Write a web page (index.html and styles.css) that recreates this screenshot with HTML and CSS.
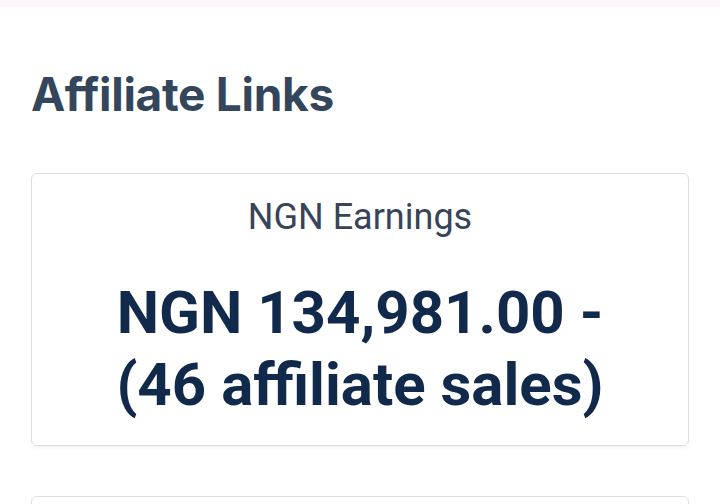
FILE: index.html
```html
<!DOCTYPE html>
<html lang="en">
<head>
<meta charset="utf-8">
<link rel="stylesheet" href="styles.css">
</head>
<body>
<div class="topbar"></div>
<main class="page">
  <h1 class="title">Affiliate Links</h1>
  <section class="card">
    <div class="label">NGN Earnings</div>
    <div class="amount">NGN 134,981.00 -<br>(46 affiliate sales)</div>
  </section>
  <section class="card next"></section>
</main>
</body>
</html>
```
FILE: styles.css
```css
html, body {
  margin: 0;
  padding: 0;
  background: #ffffff;
  overflow: hidden;
  height: 504px;
}
.topbar {
  height: 7px;
  background: #fdf6fc;
}
.page {
  padding: 0 31px;
}
.title {
  margin: 57px 0 0 0;
  font-family: Inter, "Noto Sans", sans-serif;
  font-weight: 700;
  font-size: 46px;
  line-height: 60px;
  color: #34465c;
  letter-spacing: -0.3px;
}
.card {
  margin-top: 49px;
  border: 1px solid #dddee4;
  border-radius: 6px;
  box-shadow: 0 2px 3px rgba(20, 30, 80, 0.05);
  height: 273px;
  box-sizing: border-box;
  text-align: center;
  font-family: Roboto, "Liberation Sans", sans-serif;
}
.label {
  margin-top: 23px;
  font-size: 36px;
  line-height: 40px;
  color: #384457;
}
.amount {
  margin-top: 40px;
  font-size: 60px;
  font-weight: 700;
  line-height: 72px;
  color: #11294a;
}
.next {
  margin-top: 50px;
}
```
